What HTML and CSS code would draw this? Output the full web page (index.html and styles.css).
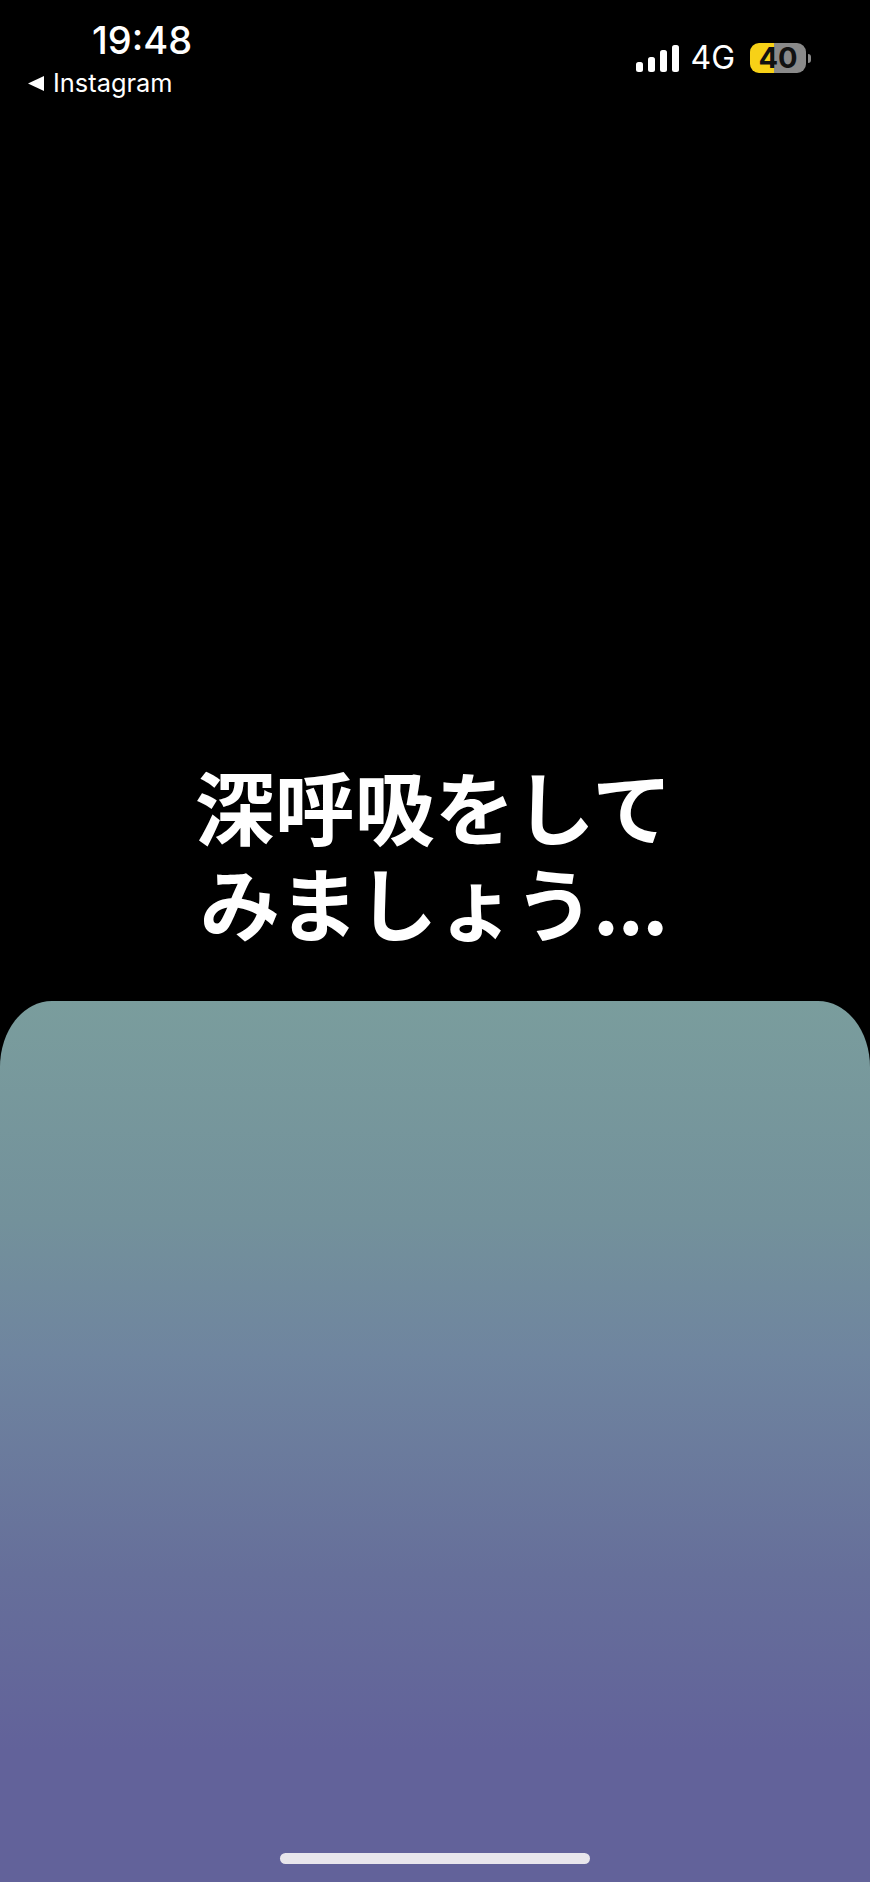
FILE: index.html
```html
<!DOCTYPE html>
<html lang="ja">
<head>
<meta charset="utf-8">
<title>深呼吸</title>
<link rel="stylesheet" href="styles.css">
</head>
<body>
<div class="screen">
  <header class="status">
    <div class="status-left">
      <div class="time">19:48</div>
      <div class="back">
        <svg class="back-arrow" viewBox="0 0 16 16" width="16" height="17"><polygon points="0,8 16,0.5 16,15.5" fill="#fff"/></svg>
        <span>Instagram</span>
      </div>
    </div>
    <div class="status-right">
      <svg class="signal" viewBox="0 0 43 27" width="43" height="27">
        <rect x="0" y="17" width="7" height="10" rx="2.5" fill="#fff"/>
        <rect x="12" y="12" width="7" height="15" rx="2.5" fill="#fff"/>
        <rect x="24" y="5" width="7" height="22" rx="2.5" fill="#fff"/>
        <rect x="36" y="0" width="7" height="27" rx="2.5" fill="#fff"/>
      </svg>
      <span class="net">4G</span>
      <div class="battery-wrap">
        <div class="battery">40</div>
        <div class="nub"></div>
      </div>
    </div>
  </header>
  <main class="message">
    <h1 class="title">深呼吸をして<span class="title-second">みましょう...</span></h1>
  </main>
  <section class="panel">
    <div class="home-bar"></div>
  </section>
</div>
</body>
</html>
```
FILE: styles.css
```css
* { box-sizing: border-box; }
html, body { margin: 0; padding: 0; background: #000; }
.screen {
  width: 870px;
  height: 1882px;
  display: flex;
  flex-direction: column;
  background: #000;
  color: #fff;
  overflow: hidden;
}
.status {
  display: flex;
  justify-content: space-between;
  align-items: flex-start;
  padding: 19px 59px 0 28px;
  font-family: Inter, "Liberation Sans", sans-serif;
}
.status-left { display: flex; flex-direction: column; }
.time {
  margin-left: 64px;
  font-size: 38px;
  line-height: 42px;
  font-weight: 500;
}
.back {
  display: flex;
  align-items: center;
  gap: 9px;
  margin-top: 5px;
  font-size: 25.4px;
  line-height: 34px;
}
.status-right {
  display: flex;
  align-items: center;
  margin-top: 24px;
}
.signal { margin-top: 1px; }
.net {
  margin-left: 11px;
  font-size: 32px;
  line-height: 30px;
  font-weight: 400;
}
.battery-wrap {
  display: flex;
  align-items: center;
  margin-left: 15px;
}
.battery {
  width: 56px;
  height: 30px;
  border-radius: 9px;
  background: linear-gradient(90deg, #f7d117 0 42%, #8a8a8a 42% 100%);
  color: #111;
  font-size: 29px;
  font-weight: 700;
  line-height: 30px;
  text-align: center;
}
.nub {
  width: 3px;
  height: 9px;
  margin-left: 2px;
  border-radius: 0 3px 3px 0;
  background: #8a8a8a;
}
.message {
  flex: 1;
  display: flex;
  flex-direction: column;
  justify-content: flex-end;
  padding-bottom: 53px;
}
.title {
  margin: 0;
  font-family: "Noto Sans CJK JP", sans-serif;
  font-size: 80px;
  line-height: 96px;
  font-weight: 700;
  text-align: center;
  padding-right: 3px;
}
.title-second {
  display: block;
  letter-spacing: -1.4px;
}
.panel {
  height: 881px;
  flex: none;
  display: flex;
  flex-direction: column;
  justify-content: flex-end;
  align-items: center;
  padding: 0 0 18px 0;
  border-radius: 52px 52px 0 0 / 66px 66px 0 0;
  background: linear-gradient(180deg, #7a9d9d 0%, #73919b 25%, #6f859f 40%, #666f9a 65%, #62629a 85%, #62629a 100%);
}
.home-bar {
  width: 310px;
  height: 11px;
  border-radius: 6px;
  background: #e8e6ec;
}
```
